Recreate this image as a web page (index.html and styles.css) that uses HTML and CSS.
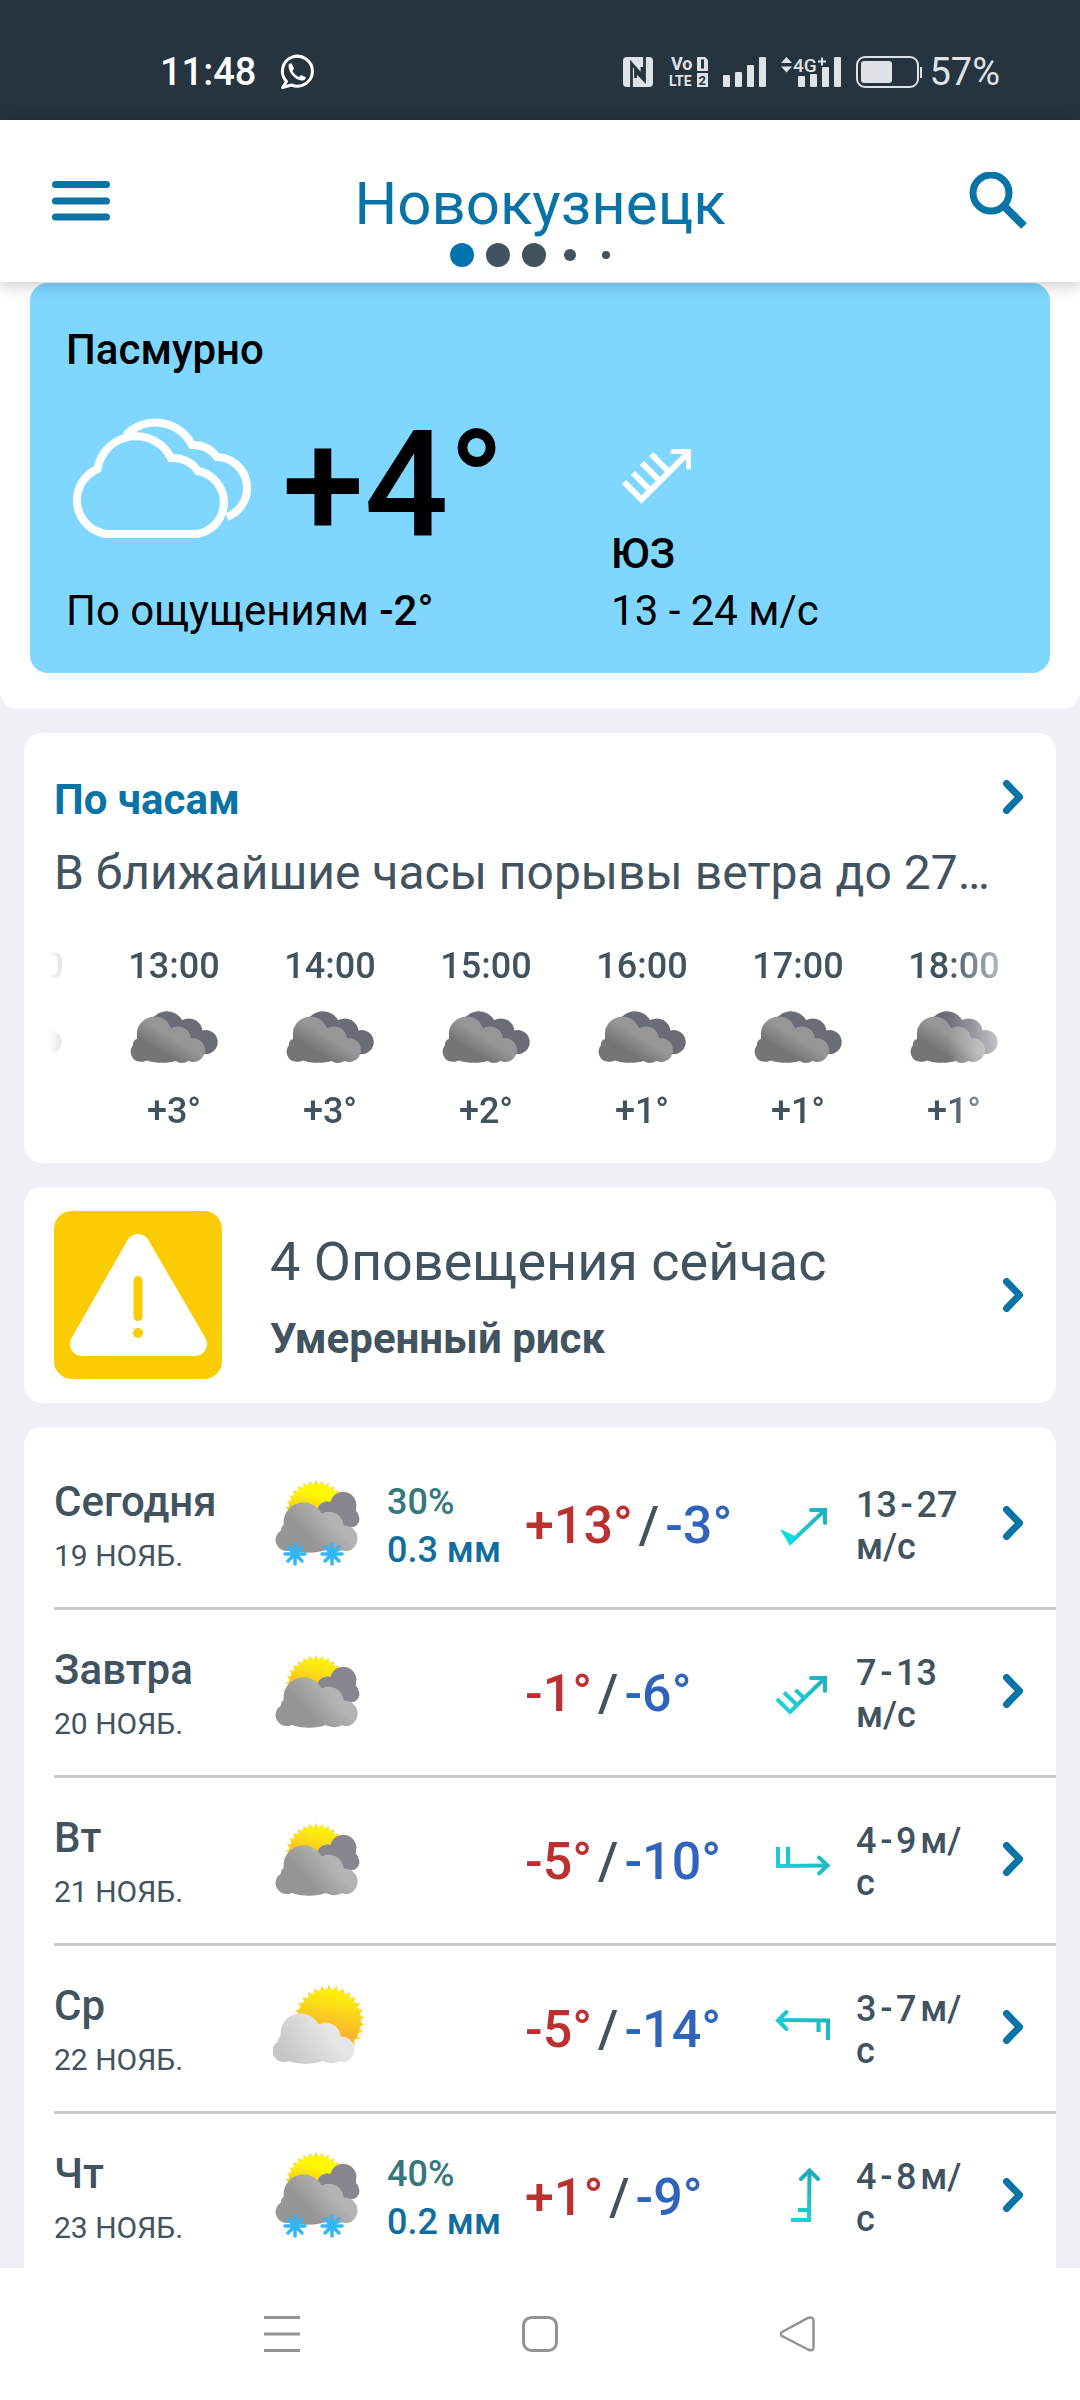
FILE: index.html
```html
<!DOCTYPE html>
<html lang="ru">
<head>
<meta charset="utf-8">
<meta name="viewport" content="width=device-width, initial-scale=1">
<title>Новокузнецк — погода</title>
<link rel="stylesheet" href="styles.css">
</head>
<body>
<svg class="sprite" width="0" height="0" aria-hidden="true">
  <defs>
    <linearGradient id="g-dark" x1="0" y1="1" x2="1" y2="0">
      <stop offset=".32" stop-color="#757575"/><stop offset=".56" stop-color="#979797"/>
    </linearGradient>
    <linearGradient id="g-grey" gradientUnits="userSpaceOnUse" x1="22" y1="76" x2="62" y2="42">
      <stop offset=".3" stop-color="#969696"/><stop offset=".85" stop-color="#b4b4b4"/>
    </linearGradient>
    <linearGradient id="g-light" gradientUnits="userSpaceOnUse" x1="16" y1="76" x2="56" y2="46">
      <stop offset="0" stop-color="#c6c6c6"/><stop offset="1" stop-color="#e6e6e6"/>
    </linearGradient>
    <linearGradient id="g-sun" x1=".6" y1="0" x2=".4" y2="1">
      <stop offset=".08" stop-color="#ffee0c"/><stop offset=".65" stop-color="#f8b72c"/>
    </linearGradient>
    <linearGradient id="g-sun-bright" x1=".6" y1="0" x2=".4" y2="1">
      <stop offset=".2" stop-color="#fffa00"/><stop offset=".7" stop-color="#fbb62a"/>
    </linearGradient>
    <linearGradient id="g-wind" gradientUnits="userSpaceOnUse" x1="54" y1="0" x2="6" y2="54">
      <stop offset="0" stop-color="#1fa9b5"/><stop offset="1" stop-color="#1cdbe2"/>
    </linearGradient>
    <linearGradient id="g-wind-up" gradientUnits="userSpaceOnUse" x1="0" y1="0" x2="0" y2="54">
      <stop offset="0" stop-color="#1fa9b5"/><stop offset="1" stop-color="#1cd0d8"/>
    </linearGradient>
    <path id="ray" d="M-2-27 0-31 2-27Z"/>
    <g id="ray5"><use href="#ray"/><use href="#ray" transform="rotate(12)"/><use href="#ray" transform="rotate(24)"/><use href="#ray" transform="rotate(36)"/><use href="#ray" transform="rotate(48)"/></g>
    <g id="rays" fill="#fadb24"><use href="#ray5"/><use href="#ray5" transform="rotate(60)"/><use href="#ray5" transform="rotate(120)"/><use href="#ray5" transform="rotate(180)"/><use href="#ray5" transform="rotate(240)"/><use href="#ray5" transform="rotate(300)"/></g>
    <path id="front" d="M14 81A11 11 0 0 1 8 60.500A6 6 0 0 1 10.600 55V51A20 20 0 0 1 48.500 43.500A15 15 0 0 1 70.600 55.500A13 13 0 0 1 75 81C72 81 70 80.500 68 80.500C64 83 57 82.500 53 80C43 83.500 28 83.500 19 80C17 81 15.500 81 14 81Z"/>
    <path id="back" d="M44 44A10.500 10.500 0 0 1 57.500 32A13 13 0 0 1 83 38V41A6 6 0 0 1 85.500 45.500A8 8 0 0 1 80 57L56 60Z" fill="#86878e"/>
    <g id="flake" stroke="#2fb8f5" stroke-width="3.500" stroke-linecap="round"><path d="M-10 0H10M0-10V10M-7-7 7 7M7-7-7 7"/></g>
    <symbol id="overcast" viewBox="0 0 88 54">
      <path d="M20 16A17 16 0 0 1 52 11A14 13 0 0 1 72.500 21.500A12 12 0 1 1 74.500 45L40 42Z" fill="#6b6d76"/>
      <path d="M9 52.500A9.500 10 0 0 1 3 36C2.500 33.500 4 31 7 30V27A17.500 17.500 0 0 1 41 19.500A13 13 0 0 1 61 29.200A12 12 0 1 1 62 53C61 53 60 52 58.500 52C54 54.500 49 54.500 46 52C38 54.500 25 54.500 17 51.500C14 53 11 53 9 52.500Z" fill="url(#g-dark)"/>
    </symbol>
    <symbol id="mostly" viewBox="0 0 96 96">
      <use href="#rays" transform="translate(43 41)"/><circle cx="43" cy="41" r="27.500" fill="url(#g-sun)"/>
      <use href="#back"/><use href="#front" fill="url(#g-grey)"/>
    </symbol>
    <symbol id="snow" viewBox="0 0 96 96">
      <g transform="translate(0 -7)">
        <use href="#rays" transform="translate(43 41)"/><circle cx="43" cy="41" r="27.500" fill="url(#g-sun-bright)"/>
        <use href="#back"/><use href="#front" fill="url(#g-grey)"/>
      </g>
      <use href="#flake" transform="translate(22 77)"/><use href="#flake" transform="translate(59 77)"/>
    </symbol>
    <symbol id="partly" viewBox="0 0 96 96">
      <use href="#rays" transform="translate(56 40) scale(1.160)"/><circle cx="56" cy="40" r="32" fill="url(#g-sun)"/>
      <use href="#front" transform="translate(-3 0)" fill="url(#g-light)"/>
    </symbol>
    <symbol id="chevron" viewBox="0 0 20 34">
      <path d="M3.500 3.500 16.500 17 3.500 30.500" fill="none" stroke="#0873a6" stroke-width="7" stroke-linecap="round" stroke-linejoin="round"/>
    </symbol>
  </defs>
</svg>

<div class="phone">
  <div class="status">
    <div class="status-group">
      <span class="clock">11:48</span>
      <svg width="34" height="36" viewBox="0 0 34 36" fill="none" stroke="#fff" stroke-width="3">
        <path d="M6.500 27.500A15 15 0 1 1 11.500 31L2.500 33.500Z" stroke-linejoin="round"/>
        <path d="M8.500 12C8.500 9.500 11 8.500 12 10L14 14.500 12.500 17C14 20 16.500 22 19 23L21 21 25.500 23C26.500 25.500 23.500 27 21 26.500C14.500 25.500 8.500 18 8.500 12Z" fill="#fff" stroke="none"/>
      </svg>
    </div>
    <div class="status-group status-right">
      <svg width="30" height="30" viewBox="0 0 30 30">
        <rect width="30" height="30" rx="4" fill="#dfe2e6"/>
        <path d="M8.500 30V6.500L19 18.500V10M21.500 0V23.500L12.500 14V21" fill="none" stroke="#26343f" stroke-width="2.800"/>
      </svg>
      <svg class="volte" width="40" height="30" viewBox="-4 0 40 30" fill="#dfe2e6">
        <text x="-1" y="13" class="vo">Vo</text><text x="-3" y="29">LTE</text>
        <path d="M25 0H33L36 3V14H25ZM25 16H36V30H25Z"/>
        <g fill="#26343f"><rect x="29" y="2.500" width="3" height="9"/><text x="26.500" y="28" class="sim">2</text></g>
      </svg>
      <svg width="43" height="30" viewBox="0 0 43 30" fill="#dfe2e6"><rect y="18" width="7" height="12" rx="1"/><rect x="12" y="15" width="7" height="15" rx="1"/><rect x="24" y="8" width="7" height="22" rx="1"/><rect x="36" width="7" height="30" rx="1"/></svg>
      <svg class="lte" width="60" height="34" viewBox="0 0 60 34" fill="#dfe2e6">
        <path d="M0 8 5.500 2 11 8ZM0 11.500H11L5.500 17.500Z"/>
        <text x="12" y="16.500">4G</text><path d="M37 5.500H40V2.500H42V5.500H45V7.500H42V10.500H40V7.500H37Z"/>
        <rect x="17" y="21" width="7" height="11" rx="1"/><rect x="29" y="19" width="7" height="13" rx="1"/><rect x="41" y="12" width="7" height="20" rx="1"/><rect x="53" y="2" width="7" height="30" rx="1"/>
      </svg>
      <svg class="battery" width="67" height="32" viewBox="0 0 67 32">
        <rect x="1" y="1" width="61" height="30" rx="8" fill="none" stroke="#dfe2e6" stroke-width="2"/>
        <rect x="5" y="5" width="31" height="22" rx="3" fill="#dfe2e6"/><path d="M65 11V22" stroke="#dfe2e6" stroke-width="2"/>
      </svg>
      <span class="percent">57%</span>
    </div>
  </div>

  <header class="header">
    <button class="icon-btn" aria-label="Меню">
      <svg width="58" height="64" viewBox="0 0 58 64" stroke="#0873a6" stroke-width="7" stroke-linecap="round"><path d="M3.500 12.500H54.500M3.500 29H54.500M3.500 45H54.500"/></svg>
    </button>
    <h1 class="city">Новокузнецк</h1>
    <button class="icon-btn" aria-label="Поиск">
      <svg width="60" height="64" viewBox="0 0 60 64" fill="none" stroke="#0873a6"><circle cx="23" cy="21" r="18" stroke-width="7"/><path d="M36 34 56 54" stroke-width="8"/></svg>
    </button>
    <div class="dots"><i class="dot dot-active"></i><i class="dot"></i><i class="dot"></i><i class="dot dot-small"></i><i class="dot dot-tiny"></i></div>
  </header>

  <main class="content">
    <section class="hero">
      <div class="now">
        <div class="now-main">
          <p class="strong">Пасмурно</p>
          <div class="now-temp">
            <svg width="192" height="150" viewBox="0 0 192 150" fill="none" stroke="#fff" stroke-width="8">
              <path d="M41 123H131A32 32 0 0 0 132 60A30 30 0 0 0 105 47A39 39 0 0 0 31.500 58A34 34 0 0 0 41 123Z"/>
              <path d="M60 24A41 41 0 0 1 126 34A30 30 0 0 1 151 46A31 31 0 0 1 161 106"/>
            </svg>
            <span class="degrees">+4°</span>
          </div>
          <p>По ощущениям <span class="strong">-2°</span></p>
        </div>
        <div class="now-wind">
          <svg width="90" height="72" viewBox="0 0 90 72" fill="none" stroke="#fff" stroke-width="6"><path d="M13 42 30.500 59.500 77 13M22 33 40 51M31 23 49 41M40 14 58 32"/><path d="M62 11.500H77.500V27" stroke-width="5" stroke-linecap="round"/></svg>
          <p class="strong">ЮЗ</p>
          <p>13 - 24 м/с</p>
        </div>
      </div>
    </section>

    <section class="card hourly">
      <a class="hourly-head" href="#hourly"><span class="title">По часам</span><svg class="chevron" width="20" height="34"><use href="#chevron"/></svg></a>
      <p class="summary">В ближайшие часы порывы ветра до 27…</p>
      <div class="strip">
        <ul class="hours">
          <li><span>12:00</span><svg width="88" height="54"><use href="#overcast"/></svg><span>+3°</span></li>
          <li><span>13:00</span><svg width="88" height="54"><use href="#overcast"/></svg><span>+3°</span></li>
          <li><span>14:00</span><svg width="88" height="54"><use href="#overcast"/></svg><span>+3°</span></li>
          <li><span>15:00</span><svg width="88" height="54"><use href="#overcast"/></svg><span>+2°</span></li>
          <li><span>16:00</span><svg width="88" height="54"><use href="#overcast"/></svg><span>+1°</span></li>
          <li><span>17:00</span><svg width="88" height="54"><use href="#overcast"/></svg><span>+1°</span></li>
          <li><span>18:00</span><svg width="88" height="54"><use href="#overcast"/></svg><span>+1°</span></li>
        </ul>
      </div>
    </section>

    <a class="card alert" href="#alerts">
      <svg width="168" height="168" viewBox="0 0 168 168">
        <rect width="168" height="168" rx="18" fill="#fbcb04"/>
        <path d="M28 133 84 35 141 133Z" fill="#fff" stroke="#fff" stroke-width="24" stroke-linejoin="round"/>
        <path d="M84 69.500V105.500" stroke="#fbcb04" stroke-width="9" stroke-linecap="round"/><circle cx="84" cy="122" r="5" fill="#fbcb04"/>
      </svg>
      <span class="alert-text"><span class="alert-title">4 Оповещения сейчас</span><span class="alert-risk">Умеренный риск</span></span>
      <svg width="20" height="34"><use href="#chevron"/></svg>
    </a>

    <ul class="card days">
      <li><a class="day" href="#d19">
        <span class="date"><b>Сегодня</b><small>19 НОЯБ.</small></span>
        <svg class="weather" width="96" height="96"><use href="#snow"/></svg>
        <span class="rain"><span class="chance">30%</span><span>0.3 мм</span></span>
        <span class="range"><span class="high">+13°</span><span>/</span><span class="low">-3°</span></span>
        <svg width="60" height="60" viewBox="0 0 60 60" fill="none" stroke="url(#g-wind)" stroke-width="4"><path d="M17 47 52 14"/><path d="M38 14H52V27" stroke-linecap="round"/><path d="M7 33 23 40.500 17 50Z" fill="#08dce4" stroke="none"/></svg>
        <span class="wind">13&#8202;-&#8202;27<br>м/с</span>
        <svg class="chevron" width="20" height="34"><use href="#chevron"/></svg>
      </a></li>
      <li><a class="day" href="#d20">
        <span class="date"><b>Завтра</b><small>20 НОЯБ.</small></span>
        <svg class="weather" width="96" height="96"><use href="#mostly"/></svg>
        <span class="rain"></span>
        <span class="range"><span class="high">-1°</span><span>/</span><span class="low">-6°</span></span>
        <svg width="60" height="60" viewBox="0 0 60 60" fill="none" stroke="url(#g-wind)" stroke-width="4"><path d="M4 35 17 48 52 14M11 28.500 24 41M22.500 26 31 34"/><path d="M38 14H52V27" stroke-linecap="round"/></svg>
        <span class="wind">7&#8202;-&#8202;13<br>м/с</span>
        <svg class="chevron" width="20" height="34"><use href="#chevron"/></svg>
      </a></li>
      <li><a class="day" href="#d21">
        <span class="date"><b>Вт</b><small>21 НОЯБ.</small></span>
        <svg class="weather" width="96" height="96"><use href="#mostly"/></svg>
        <span class="rain"></span>
        <span class="range"><span class="high">-5°</span><span>/</span><span class="low">-10°</span></span>
        <svg width="60" height="60" viewBox="0 0 60 60" fill="none" stroke="url(#g-wind)" stroke-width="4"><path d="M5 15V34L54 33.500M15 15V33"/><path d="M46 25.500 54.500 33.500 46 41.500" stroke-linecap="round"/></svg>
        <span class="wind">4&#8202;-&#8202;9&#8202;м/<br>с</span>
        <svg class="chevron" width="20" height="34"><use href="#chevron"/></svg>
      </a></li>
      <li><a class="day" href="#d22">
        <span class="date"><b>Ср</b><small>22 НОЯБ.</small></span>
        <svg class="weather" width="96" height="96"><use href="#partly"/></svg>
        <span class="rain"></span>
        <span class="range"><span class="high">-5°</span><span>/</span><span class="low">-14°</span></span>
        <svg width="60" height="60" viewBox="0 0 60 60" fill="none" stroke="url(#g-wind)" stroke-width="4"><path d="M6 20 55 20.500V40M45.500 20V32"/><path d="M13.500 12 5 20.500 13.500 29" stroke-linecap="round"/></svg>
        <span class="wind">3&#8202;-&#8202;7&#8202;м/<br>с</span>
        <svg class="chevron" width="20" height="34"><use href="#chevron"/></svg>
      </a></li>
      <li><a class="day" href="#d23">
        <span class="date"><b>Чт</b><small>23 НОЯБ.</small></span>
        <svg class="weather" width="96" height="96"><use href="#snow"/></svg>
        <span class="rain"><span class="chance">40%</span><span>0.2 мм</span></span>
        <span class="range"><span class="high">+1°</span><span>/</span><span class="low">-9°</span></span>
        <svg width="60" height="60" viewBox="0 0 60 60" fill="none" stroke="url(#g-wind-up)" stroke-width="4"><path d="M36.500 3 36 52H18M25 42H36"/><path d="M28 11 36.500 2.500 45 11" stroke-linecap="round"/></svg>
        <span class="wind">4&#8202;-&#8202;8&#8202;м/<br>с</span>
        <svg class="chevron" width="20" height="34"><use href="#chevron"/></svg>
      </a></li>
    </ul>
  </main>

  <nav class="navbar">
    <button class="nav-btn" aria-label="Недавние"><svg width="36" height="36" viewBox="0 0 36 36" stroke="#939393" stroke-width="3"><path d="M0 1.500H36M0 18H36M0 34.500H36"/></svg></button>
    <button class="nav-btn" aria-label="Домой"><svg width="36" height="36" viewBox="0 0 36 36" fill="none" stroke="#939393" stroke-width="3"><rect x="1.500" y="1.500" width="33" height="33" rx="8"/></svg></button>
    <button class="nav-btn" aria-label="Назад"><svg width="36" height="36" viewBox="0 0 36 36" fill="none" stroke="#939393" stroke-width="2.500"><path d="M2 16 28 2Q33.500 0 33.500 5V31Q33.500 36 28 33.500L2 20Q-.5 18 2 16Z"/></svg></button>
  </nav>
</div>
</body>
</html>
```
FILE: styles.css
```css
* {
  box-sizing: border-box;
}

body {
  margin: 0;
  background: #eff0f3;
  color: #41535f;
  font-family: Roboto, "Noto Sans", sans-serif;
}

p, h1, ul {
  margin: 0;
  padding: 0;
}

ul {
  list-style: none;
}

a {
  color: inherit;
  text-decoration: none;
}

button {
  padding: 0;
  border: 0;
  background: none;
}

svg {
  display: block;
  flex: none;
}

.sprite {
  position: absolute;
}

.phone {
  display: flex;
  flex-direction: column;
  height: 100vh;
}

/* Status bar */
.status {
  display: flex;
  justify-content: space-between;
  flex: none;
  height: 120px;
  padding: 52px 80px 0 160px;
  background: #26343f;
  color: #fff;
  font-size: 38px;
  line-height: 42px;
}

.status-group {
  display: flex;
  align-items: center;
  height: 40px;
  gap: 24px;
}

.clock {
  font-weight: 500;
}

.status-right {
  gap: 15px;
  color: #dfe2e6;
}

.volte {
  font-size: 14px;
  font-weight: 700;
}

.vo {
  font-size: 18px;
}

.sim {
  font-size: 13px;
}

.lte {
  font-size: 19px;
  font-weight: 500;
}

.percent {
  margin-left: -9px;
}

/* Header */
.header {
  position: relative;
  z-index: 1;
  display: grid;
  grid-template-columns: 60px 1fr 60px;
  row-gap: 7px;
  flex: none;
  padding: 52px 52px 15px;
  background: #fff;
  box-shadow: 0 2px 16px rgba(0, 0, 0, .24);
}

.city {
  color: #0873a6;
  font-size: 60px;
  font-weight: 400;
  line-height: 64px;
  text-align: center;
}

.dots {
  grid-column: 1 / -1;
  display: flex;
  justify-content: center;
  align-items: center;
  gap: 12px;
  padding-right: 12px;
}

.dot {
  width: 24px;
  height: 24px;
  border-radius: 50%;
  background: #41535f;
}

.dot-active {
  background: #0075ad;
}

.dot-small {
  width: 12px;
  height: 12px;
  margin: 0 6px;
}

.dot-tiny {
  width: 8px;
  height: 8px;
  margin: 0 8px;
}

/* Content */
.content {
  flex: 1;
  min-height: 0;
  overflow: hidden;
}

.hero {
  padding: 1px 30px 36px;
  border-radius: 0 0 18px 18px;
  background: #fff;
}

.now {
  display: grid;
  grid-template-columns: 23fr 17fr;
  padding: 43px 36px 38px;
  border-radius: 18px;
  background: #7fd7ff;
  color: #000;
  font-size: 42px;
  line-height: 48px;
}

.strong {
  font-weight: 500;
}

.now-temp {
  display: flex;
  align-items: center;
  gap: 24px;
  margin: 37px 0 26px;
}

.degrees {
  font-size: 148px;
  font-weight: 500;
  line-height: 150px;
}

.now-wind {
  display: flex;
  flex-direction: column;
  justify-content: flex-end;
  gap: 9px;
}

.now-wind svg {
  margin-bottom: 9px;
}

.card {
  margin: 24px 24px 0;
  border-radius: 18px;
  background: #fff;
}

.chevron {
  margin-bottom: 6px;
}

/* Hourly */
.hourly {
  padding: 43px 24px 31px;
}

.hourly-head {
  display: flex;
  justify-content: space-between;
  align-items: center;
  padding: 0 9px 0 6px;
}

.title {
  color: #0873a6;
  font-size: 42px;
  font-weight: 700;
  line-height: 48px;
}

.summary {
  margin: 19px 0 42px;
  padding-left: 6px;
  overflow: hidden;
  font-size: 48px;
  line-height: 60px;
  white-space: nowrap;
  text-overflow: ellipsis;
}

.strip {
  overflow: hidden;
  mask-image: linear-gradient(90deg, transparent, #000 84px calc(100% - 84px), transparent);
}

.hours {
  display: flex;
  margin-left: -108px;
}

.hours li {
  display: flex;
  flex: none;
  flex-direction: column;
  align-items: center;
  width: 156px;
  font-size: 36px;
  font-weight: 500;
  line-height: 42px;
}

.hours svg {
  margin: 22px 0 27px;
}

/* Alert */
.alert {
  display: flex;
  align-items: center;
  gap: 48px;
  padding: 24px 33px 24px 30px;
}

.alert-text {
  display: flex;
  flex: 1;
  flex-direction: column;
  gap: 21px;
  min-width: 0;
  padding-top: 3px;
}

.alert-title {
  font-size: 54px;
  line-height: 64px;
}

.alert-risk {
  font-size: 42px;
  font-weight: 700;
  line-height: 48px;
}

/* Daily forecast */
.days {
  padding: 15px 0 0 30px;
}

.day {
  display: grid;
  grid-template-columns: 219fr 114fr 138fr 248fr 83fr 147fr 20px;
  align-items: center;
  height: 168px;
  padding: 3px 33px 0 0;
  border-bottom: 3px solid #cacaca;
  font-size: 36px;
  font-weight: 500;
  line-height: 42px;
}

.date {
  display: flex;
  flex-direction: column;
  gap: 12px;
}

.date b {
  font-size: 42px;
  font-weight: 500;
  line-height: 48px;
}

.date small {
  font-size: 30px;
  font-weight: 400;
  line-height: 36px;
}

.weather {
  margin-bottom: 3px;
}

.rain {
  display: flex;
  flex-direction: column;
  color: #0f6e9f;
  line-height: 48px;
}

.chance {
  color: #35787c;
}

.range {
  display: flex;
  gap: 6px;
  font-size: 52px;
  line-height: 64px;
}

.high {
  color: #bd3030;
}

.low {
  color: #3064bc;
}

/* System navigation */
.navbar {
  display: flex;
  justify-content: center;
  gap: 138px;
  flex: none;
  height: 132px;
  background: #fff;
}

.nav-btn {
  display: flex;
  justify-content: center;
  align-items: center;
  width: 120px;
}
```
